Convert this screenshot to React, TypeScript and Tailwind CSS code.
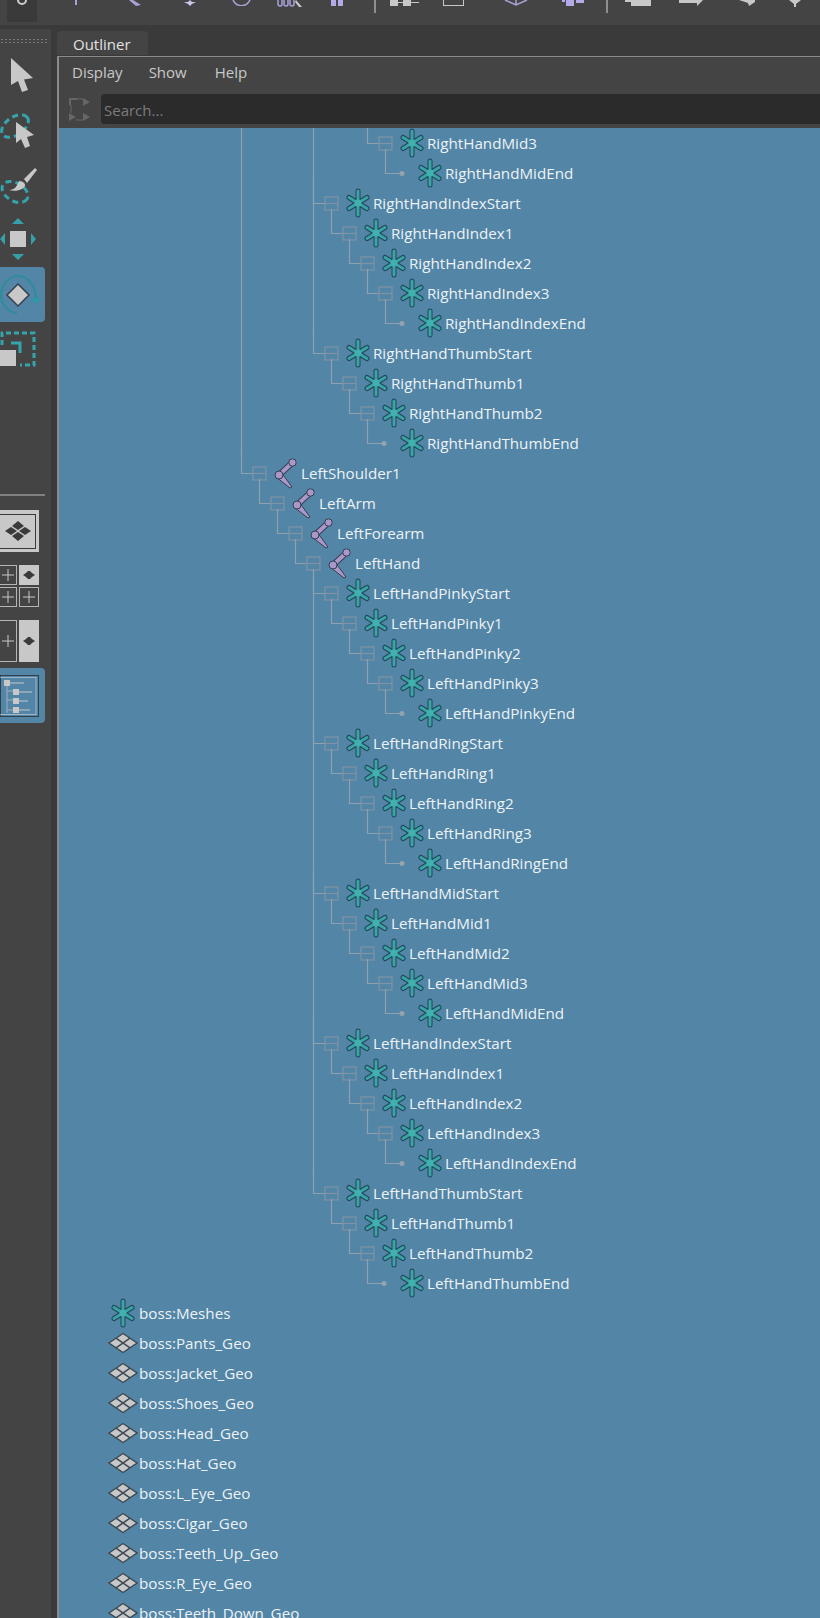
const font = "font-['Open_Sans','Noto_Sans',sans-serif]";

type Row = { name: string; depth: number; kind: "joint" | "star"; leaf?: boolean };

// one finger chain, hanging off the hand
function finger(prefix: string, last: boolean): Row[] {
  const end = last ? 2 : 3;
  const rows: Row[] = [{ name: `${prefix}Start`, depth: 4, kind: "star" }];
  for (let i = 1; i <= end; i++) rows.push({ name: `${prefix}${i}`, depth: 4 + i, kind: "star" });
  rows.push({ name: `${prefix}End`, depth: 5 + end, kind: "star", leaf: true });
  return rows;
}

const treeRows: Row[] = [
  { name: "RightHandMid3", depth: 7, kind: "star" },
  { name: "RightHandMidEnd", depth: 8, kind: "star", leaf: true },
  ...finger("RightHandIndex", false),
  ...finger("RightHandThumb", true),
  { name: "LeftShoulder1", depth: 0, kind: "joint" },
  { name: "LeftArm", depth: 1, kind: "joint" },
  { name: "LeftForearm", depth: 2, kind: "joint" },
  { name: "LeftHand", depth: 3, kind: "joint" },
  ...finger("LeftHandPinky", false),
  ...finger("LeftHandRing", false),
  ...finger("LeftHandMid", false),
  ...finger("LeftHandIndex", false),
  ...finger("LeftHandThumb", true),
];

const geoRows = [
  "boss:Pants_Geo",
  "boss:Jacket_Geo",
  "boss:Shoes_Geo",
  "boss:Head_Geo",
  "boss:Hat_Geo",
  "boss:L_Eye_Geo",
  "boss:Cigar_Geo",
  "boss:Teeth_Up_Geo",
  "boss:R_Eye_Geo",
  "boss:Teeth_Down_Geo",
];

function hasLaterAt(i: number, k: number) {
  for (let j = i + 1; j < treeRows.length; j++) {
    if (treeRows[j].depth < k) return false;
    if (treeRows[j].depth === k) return true;
  }
  return false;
}

const LINE = "#8fa1af";

function GuideCell({ line, elbow, leaf }: { line: boolean; elbow: boolean; leaf?: boolean }) {
  return (
    <svg width="18" height="30" className="shrink-0 overflow-visible" fill="none" stroke={LINE} strokeWidth="1.2">
      {line && <path d="M9.5 0V30" />}
      {elbow && <path d={leaf ? "M9.5 -9V15.5H25" : "M9.5 -9V15.5H21"} />}
    </svg>
  );
}

function ExpandBox({ leaf }: { leaf?: boolean }) {
  return (
    <svg width="18" height="30" className="shrink-0 overflow-visible" fill="none">
      {leaf ? (
        <circle cx="8" cy="15.5" r="2.5" fill="#94a3ae" />
      ) : (
        <g stroke="#7d93a5" strokeWidth="1.3">
          <rect x="3" y="9" width="13" height="13" />
          <path d="M3 15.5H16" />
        </g>
      )}
    </svg>
  );
}

function StarIcon() {
  return (
    <svg width="24" height="30" viewBox="0 0 24 30" fill="none" strokeLinecap="round">
      <path d="M12 3V27M3 9.5L21 20.5M3 20.5L21 9.5" stroke="#22465a" strokeWidth="5" />
      <path d="M12 3V27M3 9.5L21 20.5M3 20.5L21 9.5" stroke="#3aa3a5" strokeWidth="3" />
      <circle cx="12" cy="15" r="3.5" fill="#42b0ae" />
    </svg>
  );
}

function JointIcon() {
  return (
    <svg width="24" height="32" viewBox="0 0 24 32" fill="none">
      <path d="M6 18L19 6" stroke="#33404f" strokeWidth="6" />
      <path d="M6 18L19 6" stroke="#ab97c9" strokeWidth="4" />
      <path d="M3 20L8 15L19 30L17 31Z" fill="#ab97c9" stroke="#33404f" strokeLinejoin="round" />
      <circle cx="19.5" cy="5.5" r="3.7" fill="#ab97c9" stroke="#33404f" />
      <circle cx="6" cy="18" r="4" fill="#ab97c9" stroke="#33404f" />
    </svg>
  );
}

function GeoIcon() {
  return (
    <svg width="30" height="22" viewBox="0 0 30 22" fill="#c8c8c8" stroke="#3d4a54" strokeWidth="1.4">
      <path d="M1 11L15 1.5L29 11L15 20.5Z" />
      <path d="M8 6.2L22 15.8M22 6.2L8 15.8" strokeWidth="1.6" />
    </svg>
  );
}

function TreeRow({ row, index }: { row: Row; index: number }) {
  const cells = [];
  for (let k = 0; k <= row.depth; k++) {
    cells.push(<GuideCell key={k} line={hasLaterAt(index, k)} elbow={k === row.depth} leaf={row.leaf} />);
  }
  return (
    <div className="flex h-[30px] items-center">
      <div className="w-[173px] shrink-0" />
      {cells}
      <ExpandBox leaf={row.leaf} />
      {row.kind === "joint" ? (
        <div className="w-[33px] shrink-0 pl-[5px]"><JointIcon /></div>
      ) : (
        <div className="w-[33px] shrink-0 pl-[6px]"><StarIcon /></div>
      )}
      <span className="text-[15.2px] leading-[30px] text-[#eef2f5]">{row.name}</span>
    </div>
  );
}

function TopIcons() {
  return (
    <div className="flex h-[25px] items-start overflow-hidden bg-[#444444]">
      <div className="ml-[7px] flex h-[22px] w-[30px] justify-center bg-[#3a3a3a]">
        <svg width="12" height="6" viewBox="0 0 12 6" fill="none" stroke="#cfcfcf" strokeWidth="2">
          <circle cx="6" cy="0" r="4" />
        </svg>
      </div>
      <svg className="ml-[36px]" width="6" height="5" fill="#a7a3d8"><rect x="2" width="2" height="5" /></svg>
      <svg className="ml-[50px]" width="12" height="6" fill="#a7a3d8"><path d="M0 0H4L12 5L7 6Z" /></svg>
      <svg className="ml-[43px]" width="12" height="6" fill="#c9c5ee"><path d="M6 0L8 2H12L8 4L6 6L4 4L0 2H4Z" /></svg>
      <svg className="ml-[36px]" width="20" height="6" fill="none" stroke="#a7a3d8" strokeWidth="1.5"><path d="M1 0C4 7 14 8 18 0" /></svg>
      <svg className="ml-[25px]" width="26" height="7" fill="none" stroke="#a7a3d8" strokeWidth="1.5">
        <path d="M1 0V4A2 2 0 0 0 5 4V0M7 0V4A2 2 0 0 0 11 4V0M13 0V4A2 2 0 0 0 17 4V0" />
        <path d="M19 0L25 7L22 7L18 2Z" fill="#c8c8c8" stroke="none" />
      </svg>
      <svg className="ml-[28px]" width="13" height="6" fill="#b6a9e8"><rect width="5" height="6" /><rect x="7" width="5" height="6" /></svg>
      <div className="ml-[30px] h-[13px] w-[2px] bg-[#8f8f8f]" />
      <svg className="ml-[14px]" width="30" height="6" fill="#c8c8c8">
        <rect width="8" height="6" /><rect x="8" y="2" width="5" height="1" /><rect x="13" width="8" height="6" /><rect x="21" y="2" width="8" height="1" />
      </svg>
      <div className="ml-[23px] h-[6px] w-[21px] border border-t-0 border-[#c8c8c8]" />
      <svg className="ml-[40px]" width="24" height="6" fill="none" stroke="#a7a3d8" strokeWidth="1.5"><path d="M1 0L12 5L23 0M12 5V0" /></svg>
      <svg className="ml-[34px]" width="24" height="6" fill="#b6a9e8"><rect y="0" width="3" height="2" /><rect x="4" width="8" height="6" /><rect x="14" width="8" height="3" /></svg>
      <div className="ml-[20px] h-[13px] w-[2px] bg-[#8f8f8f]" />
      <svg className="ml-[17px]" width="26" height="6" fill="#c8c8c8"><rect x="6" width="20" height="6" /><rect width="6" height="2" /></svg>
      <svg className="ml-[28px]" width="24" height="7" fill="#c8c8c8"><path d="M0 0H24L18 6V3H0Z" /></svg>
      <svg className="ml-[36px]" width="16" height="7" fill="#c8c8c8"><path d="M0 0H16V2L10 6L9 3Z" /></svg>
      <svg className="ml-[34px]" width="12" height="7" fill="#c8c8c8"><path d="M0 0H12L7 4V7H5V4Z" /></svg>
    </div>
  );
}

function ToolArrow() {
  return (
    <svg width="36" height="36" viewBox="0 0 36 36" fill="#c8c8c8">
      <path d="M5 1L27 21L18 22.5L22 33L16 35L12 24L5 28Z" />
    </svg>
  );
}

function LassoTool() {
  return (
    <svg width="38" height="42" viewBox="0 0 38 42" fill="none">
      <ellipse cx="15" cy="16" rx="15" ry="9" transform="rotate(-35 15 16)" stroke="#35a5ad" strokeWidth="3" strokeDasharray="6 4" />
      <path d="M16 12L34 25L27 27L30 36L25 38L21 29L16 33Z" fill="#c8c8c8" />
    </svg>
  );
}

function PaintTool() {
  return (
    <svg width="38" height="42" viewBox="0 0 38 42" fill="none">
      <ellipse cx="15" cy="26" rx="14" ry="9" transform="rotate(30 15 26)" stroke="#35a5ad" strokeWidth="3" strokeDasharray="6 4" />
      <path d="M24 13L35 2L37 4L27 17Z" fill="#c8c8c8" />
      <path d="M9 24C15 24 17 20 19 15C23 15 26 18 25 20C23 24 15 26 9 24Z" fill="#c8c8c8" />
    </svg>
  );
}

function MoveTool() {
  return (
    <svg width="40" height="42" viewBox="0 0 40 42">
      <rect x="10" y="13" width="16" height="16" fill="#c8c8c8" />
      <path d="M18 0L24 6H12ZM18 42L12 36H24ZM0 21L5 15V27ZM36 21L31 15V27Z" fill="#35a0aa" />
    </svg>
  );
}

function RotateTool() {
  return (
    <svg width="42" height="44" viewBox="0 0 42 44" fill="none">
      <path d="M17 40C8 40 1 31 1 22C1 12 9 3 18 3C27 3 35 11 36 25" stroke="#2d8d99" strokeWidth="2" />
      <path d="M31 25H41L36 31Z" fill="#2d9aa3" />
      <path d="M18 11L29 22L18 33L7 22Z" fill="#c8c8c8" stroke="#35424d" strokeWidth="1.5" />
    </svg>
  );
}

function ScaleTool() {
  return (
    <svg width="36" height="36" viewBox="0 0 36 36" fill="none">
      <path d="M2 14V2H34V34H20" stroke="#35a5ad" strokeWidth="3" strokeDasharray="5 3" />
      <path d="M11 12H20V22" stroke="#35a5ad" strokeWidth="3" />
      <rect y="19" width="16" height="16" fill="#c8c8c8" />
    </svg>
  );
}

function Plus() {
  return (
    <svg width="12" height="12" viewBox="0 0 12 12" stroke="#c8c8c8">
      <path d="M6 0V12M0 6H12" />
    </svg>
  );
}

function SmallDiamond() {
  return (
    <svg width="12" height="8" viewBox="0 0 12 8" fill="#3a3a3a">
      <path d="M0 4L3 2L5 0H7L9 2L12 4L9 6L7 8H5L3 6Z" />
    </svg>
  );
}

function LeftBar() {
  return (
    <div className="flex w-[51px] shrink-0 flex-col bg-[#444444] pt-[9px]">
      <div className="h-[6px] w-[48px] bg-[radial-gradient(#7a7a7a_1px,transparent_1px)] bg-[length:4px_3px]" />
      <div className="ml-[6px] mt-[13px]"><ToolArrow /></div>
      <div className="mt-[17px]"><LassoTool /></div>
      <div className="mt-[14px]"><PaintTool /></div>
      <div className="mt-[10px]"><MoveTool /></div>
      <div className="mt-[7px] flex h-[55px] w-[45px] items-center rounded-r-sm bg-[#5285a6]"><RotateTool /></div>
      <div className="mt-[9px]"><ScaleTool /></div>

      <div className="mt-[127px] h-[2px] w-[45px] bg-[#808080]" />

      <div className="mt-[14px] flex h-[42px] w-[39px] items-center bg-[#c8c8c8] pr-[3px]">
        <div className="flex h-[35px] w-full items-center justify-center border border-l-0 border-[#3a3a3a]">
          <svg width="26" height="22" viewBox="0 0 26 22" fill="#3a3a3a">
            <path d="M13 1L19 6L13 10L7 6ZM6 7L12 11L6 15L0 11ZM20 7L26 11L20 15L14 11ZM13 12L19 16L13 21L7 16Z" />
          </svg>
        </div>
      </div>

      <div className="mt-[13px] grid w-[39px] grid-cols-[17px_20px] gap-x-[2px] gap-y-[2px]">
        <div className="flex h-[20px] items-center justify-center border border-l-0 border-[#b5b5b5]"><Plus /></div>
        <div className="flex h-[20px] items-center justify-center bg-[#c8c8c8]"><SmallDiamond /></div>
        <div className="flex h-[20px] items-center justify-center border border-l-0 border-[#b5b5b5]"><Plus /></div>
        <div className="flex h-[20px] items-center justify-center border border-[#b5b5b5]"><Plus /></div>
      </div>

      <div className="mt-[13px] grid h-[42px] w-[39px] grid-cols-[17px_20px] gap-x-[2px]">
        <div className="flex items-center justify-center border border-l-0 border-[#b5b5b5]"><Plus /></div>
        <div className="flex items-center justify-center bg-[#c8c8c8]"><SmallDiamond /></div>
      </div>

      <div className="mt-[6px] flex h-[55px] w-[45px] items-center rounded-r-sm bg-[#5285a6]">
        <svg width="40" height="44" viewBox="0 0 40 44" fill="none">
          <rect x="0.5" y="1.5" width="38" height="41" stroke="#2f3f4c" />
          <rect x="-1" y="3.5" width="37" height="37" stroke="#c0c8ce" strokeOpacity="0.7" />
          <path d="M7 12V39" stroke="#9db0bd" />
          <path d="M7 17H14M7 26H14M7 36H14" stroke="#9db0bd" />
          <rect x="4" y="6" width="6" height="6" fill="#c8c8c8" />
          <path d="M10 9H24" stroke="#c8c8c8" />
          <rect x="13" y="15" width="6" height="6" fill="#c8c8c8" />
          <path d="M19 18H32" stroke="#c8c8c8" />
          <rect x="13" y="24" width="6" height="6" fill="#c8c8c8" />
          <path d="M19 27H28" stroke="#c8c8c8" />
          <rect x="13" y="33" width="6" height="6" fill="#c8c8c8" />
          <path d="M19 36H30" stroke="#c8c8c8" />
        </svg>
      </div>
    </div>
  );
}

export default function App() {
  return (
    <div className={`flex h-[1618px] w-[820px] flex-col overflow-hidden bg-[#3a3a3a] ${font}`}>
      <TopIcons />
      <div className="flex min-h-0 flex-1 pt-[4px]">
        <LeftBar />
        <div className="flex min-w-0 flex-1 flex-col pl-[6px]">
          {/* Tab */}
          <div className="flex h-[27px] shrink-0 items-end">
            <div className="mb-[1px] h-[24px] w-[91px] rounded-t-sm bg-[#444444] pl-[16px] pt-[1px] text-[15px] leading-[24px] text-[#e2e2e2]">
              Outliner
            </div>
          </div>

          {/* Panel */}
          <div className="flex min-h-0 flex-1 flex-col border-l-2 border-t border-[#8b8b8b] bg-[#444444]">
            <div className="flex h-[37px] shrink-0 items-center pb-[6px] text-[15px] text-[#c9c9c9]">
              <span className="ml-[13px]">Display</span>
              <span className="ml-[26px]">Show</span>
              <span className="ml-[28px]">Help</span>
            </div>

            <div className="flex h-[34px] shrink-0 items-start">
              <svg className="ml-[9px] mt-[3px]" width="24" height="24" viewBox="0 0 24 24" fill="#666666">
                <path d="M15 1L22 5L15 9ZM15 16L22 20L15 24ZM1 1H9V3H3V8H1ZM1 16L8 20L1 24Z" />
                <path d="M3 8V16M8 23H15M5 2H15" stroke="#666666" />
              </svg>
              <div className="ml-[9px] h-[30px] flex-1 rounded-l-sm bg-[#2b2b2b] pl-[3px] text-[15px] leading-[32px] text-[#7b7b7b]">
                Search...
              </div>
            </div>

            <div className="min-h-0 flex-1 overflow-hidden bg-[#5285a6]">
              {treeRows.map((row, i) => (
                <TreeRow key={row.name} row={row} index={i} />
              ))}
              <div className="flex h-[30px] items-center">
                <div className="ml-[48px] flex w-[32px] shrink-0 justify-center"><StarIcon /></div>
                <span className="text-[15.2px] leading-[30px] text-[#eef2f5]">boss:Meshes</span>
              </div>
              {geoRows.map((name) => (
                <div key={name} className="flex h-[30px] items-center">
                  <div className="ml-[47px] flex w-[33px] shrink-0 justify-center"><GeoIcon /></div>
                  <span className="text-[15.2px] leading-[30px] text-[#eef2f5]">{name}</span>
                </div>
              ))}
            </div>
          </div>
        </div>
      </div>
    </div>
  );
}
